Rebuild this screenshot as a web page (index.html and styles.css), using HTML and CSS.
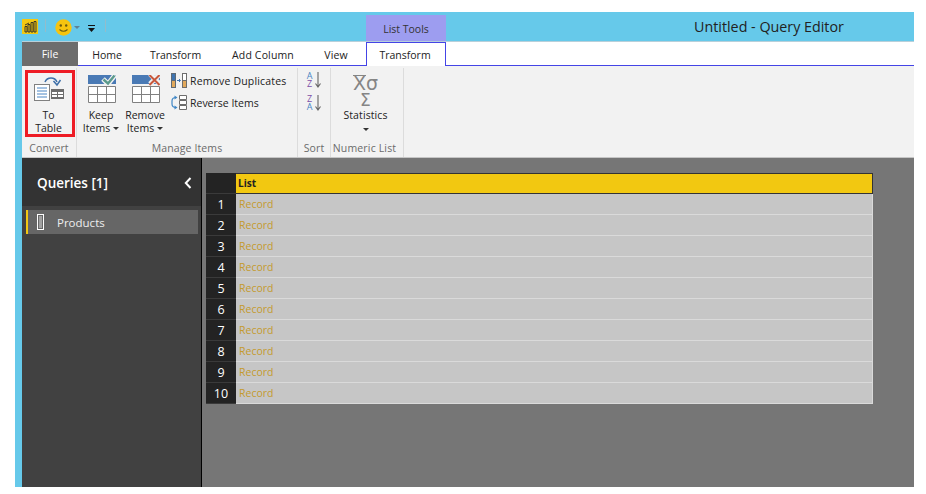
FILE: index.html
```html
<!DOCTYPE html>
<html lang="en">
<head>
<meta charset="utf-8">
<title>Untitled - Query Editor</title>
<link rel="stylesheet" href="styles.css">
</head>
<body>
<div class="window">
  <header class="titlebar">
    <div class="qat">
      <svg class="pbi" width="16" height="15" viewBox="0 0 16 15"><rect width="16" height="15" fill="#f2c811"/><path d="M3 7.500h2V13H3zM6 5.500h2V13H6zM9 3.500h2V13H9zM12 2.500h2V13h-2zM3 6l4-2" fill="none" stroke="#2a2a2a" stroke-width=".9"/></svg>
      <span class="qat-sep"></span>
      <svg width="17" height="17" viewBox="0 0 17 17"><circle cx="8.500" cy="8.500" r="8.200" fill="#f6c40f"/><circle cx="5.800" cy="6.500" r="1.200" fill="#6a5a10"/><circle cx="11.200" cy="6.500" r="1.200" fill="#6a5a10"/><path d="M4.500 10.500q4 3.500 8 0" fill="none" stroke="#6a5a10" stroke-width="1.100"/></svg>
      <svg class="qat-caret" width="6" height="4" viewBox="0 0 6 4"><path d="M0 0h6L3 3z" fill="#5d8296"/></svg>
      <svg class="qat-more" width="7" height="7" viewBox="0 0 7 7"><path d="M0 0h7v1H0zM0 3h7L3.500 7z" fill="#111"/></svg>
      <span class="qat-sep qat-sep-last"></span>
    </div>
    <div class="context-tab">List Tools</div>
    <div class="app-title">Untitled - Query Editor</div>
  </header>
  <div class="frame">
    <nav class="tabs">
      <div class="tab tab-file">File</div>
      <div class="tab tab-home">Home</div>
      <div class="tab tab-transform">Transform</div>
      <div class="tab tab-add">Add Column</div>
      <div class="tab tab-view">View</div>
      <div class="tab tab-gap"></div>
      <div class="tab tab-active">Transform</div>
      <div class="tab tab-rest"></div>
    </nav>
    <section class="ribbon">
      <div class="group group-convert">
        <div class="group-body convert-body">
          <div class="big-btn selected">
            <svg width="30" height="26" viewBox="0 0 30 26"><path d="M11 7a6.500 6.500 0 0 1 12 0" fill="none" stroke="#3d6fa8" stroke-width="1.500"/><path d="M19.500 6l3.500 4 3.500-5" fill="none" stroke="#3d6fa8" stroke-width="1.500"/><rect x=".5" y="9.500" width="15" height="16" fill="#fff" stroke="#808080"/><path d="M3 13h10M3 16h10M3 19h10M3 22h10" stroke="#4a86c5"/><rect x="17" y="14" width="13" height="10" fill="#6d6d6d"/><path d="M18 17h5v2h-5zM24 17h5v2h-5zM18 20h5v2h-5zM24 20h5v2h-5z" fill="#fff"/></svg>
            <span class="big-label">To<br>Table</span>
          </div>
        </div>
        <div class="group-label">Convert</div>
      </div>
      <div class="group group-manage">
        <div class="group-body">
          <div class="items-btn">
            <svg width="28" height="28" viewBox="0 0 28 28"><rect x="0" y="0" width="28" height="9" fill="#4a7ab5"/><path d="M15 4l5 5 7-9" fill="none" stroke="#f2f2f2" stroke-width="5"/><path d="M15.500 4.500l4.500 4 6.500-8" fill="none" stroke="#5b9a8c" stroke-width="2.400"/><path d="M.5 11.500h27v16H.5zM.5 19.500h27M9.500 11.500v16M18.500 11.500v16" fill="#fff" stroke="#808080"/></svg>
            <span class="big-label items-label">Keep<br>Items<i class="caret"></i></span>
          </div>
          <div class="items-btn">
            <svg width="28" height="28" viewBox="0 0 28 28"><rect x="0" y="0" width="28" height="9" fill="#4a7ab5"/><path d="M18 -1l10 10M28 -1L18 9" stroke="#f2f2f2" stroke-width="5"/><path d="M17.500 0l10 10M27.500 0l-10 10" stroke="#c8583c" stroke-width="2"/><path d="M.5 11.500h27v16H.5zM.5 19.500h27M9.500 11.500v16M18.500 11.500v16" fill="#fff" stroke="#808080"/></svg>
            <span class="big-label items-label">Remove<br>Items<i class="caret"></i></span>
          </div>
          <div class="small-col">
            <div class="small-btn">
              <svg width="16" height="15" viewBox="0 0 16 15"><rect width="5" height="15" fill="#5f6a75"/><rect x="1" y="1" width="3" height="6" fill="#3f74b0"/><rect x="1" y="8" width="3" height="6" fill="#e2a95c"/><rect x="11" width="5" height="15" fill="#6d6d6d"/><rect x="12" y="1" width="3" height="6" fill="#fff"/><rect x="12" y="8" width="3" height="6" fill="#e2a95c"/><path d="M6 7.500h3M8 6l1.500 1.500L8 9" fill="none" stroke="#3f74b0"/></svg>
              <span class="dup-text">Remove Duplicates</span>
            </div>
            <div class="small-btn">
              <svg width="16" height="15" viewBox="0 0 16 15"><path d="M5 2.500Q1 2.500 1 6v3q0 3.500 4 3.500" fill="none" stroke="#3f86c5" stroke-width="1.200"/><path d="M3.500 .5l3 2-3 2zM3.500 10.500l3 2-3 2z" fill="#3f86c5"/><path d="M8.500 .5h7v4h-7zM8.500 5.500h7v4h-7zM8.500 10.500h7v4h-7z" fill="#fff" stroke="#6d6d6d"/></svg>
              <span>Reverse Items</span>
            </div>
          </div>
        </div>
        <div class="group-label">Manage Items</div>
      </div>
      <div class="group group-sort">
        <div class="group-body sort-body">
          <div class="sort-btn">
            <span class="az"><b class="a1">A</b><b class="z1">Z</b></span>
            <svg width="6" height="16" viewBox="0 0 6 16"><path d="M3 0v15M.5 11.500L3 15l2.500-3.500" fill="none" stroke="#666" stroke-width="1.100"/></svg>
          </div>
          <div class="sort-btn">
            <span class="az"><b class="z1">Z</b><b class="a1">A</b></span>
            <svg width="6" height="16" viewBox="0 0 6 16"><path d="M3 0v15M.5 11.500L3 15l2.500-3.500" fill="none" stroke="#666" stroke-width="1.100"/></svg>
          </div>
        </div>
        <div class="group-label">Sort</div>
      </div>
      <div class="group group-stats">
        <div class="group-body stats-body">
          <div class="sigma"><span class="xbar">X</span><span>σ</span><br><span class="sum">Σ</span></div>
          <span class="big-label">Statistics</span>
          <i class="caret caret-solo"></i>
        </div>
        <div class="group-label stats-label">Numeric List</div>
      </div>
    </section>
    <div class="ribbon-rule"></div>
    <main class="content">
      <aside class="sidebar">
        <div class="side-head">
          <span>Queries [1]</span>
          <svg width="8" height="12" viewBox="0 0 8 12"><path d="M6.500 1L1.800 6l4.700 5" fill="none" stroke="#fff" stroke-width="2"/></svg>
        </div>
        <div class="side-list">
          <div class="query">
            <svg width="7" height="16" viewBox="0 0 7 16"><rect x=".5" y=".5" width="6" height="15" fill="none" stroke="#fff"/><path d="M2 3h3M2 5h3M2 7h3M2 9h3M2 11h3M2 13h3" stroke="#ddd"/></svg>
            <span>Products</span>
          </div>
        </div>
      </aside>
      <div class="canvas">
        <div class="grid">
          <div class="corner"></div><div class="col-head">List</div>
          <div class="idx">1</div><div class="cell">Record</div>
          <div class="idx">2</div><div class="cell">Record</div>
          <div class="idx">3</div><div class="cell">Record</div>
          <div class="idx">4</div><div class="cell">Record</div>
          <div class="idx">5</div><div class="cell">Record</div>
          <div class="idx">6</div><div class="cell">Record</div>
          <div class="idx">7</div><div class="cell">Record</div>
          <div class="idx">8</div><div class="cell">Record</div>
          <div class="idx">9</div><div class="cell">Record</div>
          <div class="idx">10</div><div class="cell">Record</div>
        </div>
      </div>
    </main>
  </div>
</div>
</body>
</html>
```
FILE: styles.css
```css
* { box-sizing: border-box; }
html, body { margin: 0; height: 100%; background: #fff; overflow: hidden; }
body {
  padding: 12px 12px 7px 15px;
  font-family: "Open Sans", "Noto Sans", sans-serif;
  font-size: 10.5px;
  color: #222;
}
.window { height: 475px; display: flex; flex-direction: column; background: #66c9ea; }
.titlebar { height: 29px; display: flex; align-items: flex-start; flex: none; }
.qat { width: 351px; padding: 7px 0 0 7px; display: flex; align-items: flex-start; flex: none; }
.pbi { display: block; }
.qat-sep { width: 1px; height: 13px; background: #93bccb; margin: 0 9px 0 7px; }
.qat-caret { margin: 7px 4px 0 2px; }
.qat-more { margin: 6px 10px 0 4px; }
.qat-sep-last { margin: 0; }
.context-tab {
  width: 80px; height: 26px; margin-top: 3px; flex: none;
  background: #9d9df0; text-align: center; line-height: 29px; color: #333;
}
.app-title { margin-left: 248px; font-size: 14.3px; line-height: 30px; color: #222; white-space: nowrap; }
.frame { flex: 1; min-height: 0; margin-left: 7px; display: flex; flex-direction: column; background: #f2f2f2; }
.tabs { height: 25px; display: flex; background: #fff; flex: none; border-top: 1px solid #b8d0da; }
.tab { height: 24px; line-height: 26px; color: #222; box-shadow: inset 0 -1px 0 #4444e6; flex: none; text-align: center; }
.tab-file { width: 56px; background: #6d6d6d; color: #fff; line-height: 24px; box-shadow: none; }
.tab-home { width: 58px; }
.tab-transform { width: 79px; }
.tab-add { width: 96px; letter-spacing: .15px; }
.tab-view { width: 50px; letter-spacing: .15px; }
.tab-gap { width: 5px; }
.tab-active {
  width: 80px; background: #fff; padding-right: 2px;
  border: 1px solid #4444e6; border-bottom: 0; box-shadow: none; line-height: 25px;
}
.tab-rest { flex: 1; }
.ribbon { height: 91px; display: flex; flex: none; padding-top: 2px; }
.group { display: flex; flex-direction: column; border-right: 1px solid #dcdcdc; flex: none; }
.group-body { flex: 1; min-height: 0; display: flex; }
.group-label { height: 17px; line-height: 16px; text-align: center; color: #6b6b6b; letter-spacing: .12px; white-space: nowrap; }
.stats-label { padding-right: 5px; letter-spacing: .17px; }
.group-convert { width: 55px; }
.convert-body { padding-left: 3px; }
.group-manage { width: 221px; }
.group-sort { width: 33px; }
.group-stats { width: 73px; }
.big-btn {
  width: 50px; height: 67px; border: 3px solid #ee1c25; padding-right: 2px;
  display: flex; flex-direction: column; align-items: center; margin-top: 2px;
}
.big-btn svg { margin: 2px 0 8px 0; display: block; flex: none; }
.big-btn .big-label { padding-right: 1px; }
.big-label { text-align: center; line-height: 13px; display: block; white-space: nowrap; }
.items-btn { width: 44px; padding-top: 7px; display: flex; flex-direction: column; align-items: center; flex: none; }
.items-btn svg { display: block; margin-bottom: 6px; flex: none; }
.items-btn:first-child { margin-left: 3px; }
.items-label { padding-right: 2px; }
.caret { display: inline-block; width: 0; height: 0; margin-left: 3px; vertical-align: 2px; border: 3px solid transparent; border-top-color: #333; border-bottom: 0; }
.small-col { padding: 5px 0 0 3px; display: flex; flex-direction: column; gap: 7px; }
.small-btn { height: 15px; display: flex; align-items: center; gap: 3px; white-space: nowrap; color: #222; }
.dup-text { letter-spacing: .17px; }
.sort-body { flex-direction: column; padding: 4px 0 0 8px; gap: 7px; }
.sort-btn { display: flex; height: 16px; gap: 2px; align-items: flex-start; flex: none; }
.az { width: 7px; display: flex; flex-direction: column; font-size: 9px; line-height: 8px; text-align: center; }
.az b { font-weight: 400; display: block; }
.a1 { color: #4a86c5; }
.z1 { color: #7d4fa8; }
.stats-body { flex-direction: column; align-items: center; padding: 7px 3px 0 0; }
.sigma { font-family: "DejaVu Sans", sans-serif; color: #858585; font-size: 19px; line-height: 16px; text-align: center; height: 33px; white-space: nowrap; }
.xbar { display: inline-block; height: 16px; line-height: 14px; border-top: 1px solid #858585; }
.sum { font-size: 17px; }
.stats-body .big-label { line-height: 13px; margin-top: 1px; letter-spacing: .1px; }
.caret-solo { margin: 6px 0 0; }
.ribbon-rule { height: 1px; background: #c6c6c6; flex: none; }
.content { flex: 1; min-height: 0; display: flex; }
.sidebar { width: 179px; flex: none; background: #414141; color: #fff; display: flex; flex-direction: column; }
.side-head {
  height: 48px; background: #333; flex: none;
  display: flex; align-items: center; justify-content: space-between;
  padding: 2px 9px 0 15px; font-size: 13.5px; font-weight: 600;
}
.side-list { padding: 4px 3px 0 4px; }
.query {
  height: 24px; background: #666; border-left: 2px solid #f2c811;
  display: flex; align-items: center; gap: 13px; padding-left: 9px;
  color: #eee; font-size: 11.5px;
}
.canvas { flex: 1; min-width: 0; background: #767676; border-left: 1px solid #000; padding: 15px 41px 0 4px; }
.grid { display: grid; grid-template-columns: 30px 1fr; grid-auto-rows: 21px; }
.corner { background: #232323; border-bottom: 1px solid #3a3a3a; }
.col-head {
  background: #f2c811; border: 1px solid #333; border-left: 0;
  font-weight: 700; color: #222; padding-left: 2px; line-height: 19px; font-size: 10px;
}
.idx {
  background: #232323; color: #fff; font-size: 12.5px; text-align: center;
  line-height: 21px; border-bottom: 1px solid #3a3a3a;
}
.cell {
  background: #c6c6c6; color: #c49a2e; padding-left: 3px; line-height: 20px;
  border-bottom: 1px solid #dadada; border-right: 1px solid #dadada;
}
```
